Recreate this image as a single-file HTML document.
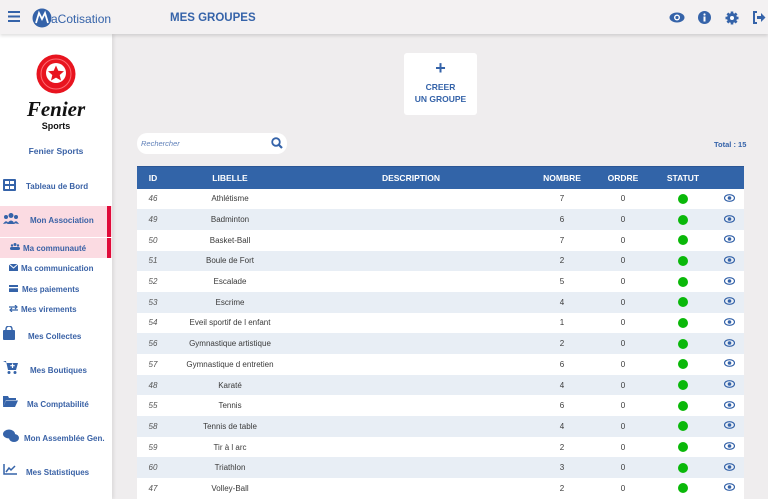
<!DOCTYPE html>
<html><head><meta charset="utf-8"><style>
*{margin:0;padding:0;box-sizing:border-box}
body{width:768px;height:499px;overflow:hidden;background:#efedee;font-family:"Liberation Sans",sans-serif;position:relative}
.top{position:absolute;left:0;top:0;width:768px;height:34px;background:#f3f1f2;box-shadow:0 2px 3px rgba(0,0,0,.12);z-index:2}
.side{position:absolute;left:0;top:34px;width:112px;height:465px;background:#fff;box-shadow:2px 0 3px rgba(0,0,0,.08)}
.blue{color:#3563a9}
.it{position:absolute;left:0;width:112px;font-size:8px;font-weight:bold;color:#3a62a6;white-space:nowrap}
.it svg{position:absolute}
.it span{position:absolute;top:0}
table{position:absolute;left:137px;top:166px;width:607px;border-collapse:collapse;font-size:8px}
th{background:#3264a8;color:#fff;height:22px;font-size:8.5px;font-weight:bold;text-align:center;border-top:1px solid #2b5694}
td{height:20.7px;text-align:center;color:#3a3a3a}
td.id{font-style:italic;color:#555}
tr:nth-child(even) td{background:#e8eef5}
tr:nth-child(odd) td{background:#fff}
.dot{display:inline-block;width:10px;height:10px;border-radius:50%;background:#0ab80a;vertical-align:middle}
</style></head><body>
<div class="top">
 <svg style="position:absolute;left:8px;top:11px" width="12" height="11"><rect y="0" width="12" height="2" fill="#3563a9"/><rect y="4.5" width="12" height="2" fill="#3563a9"/><rect y="9" width="12" height="2" fill="#3563a9"/></svg>
 <svg style="position:absolute;left:32px;top:8px" width="20" height="20"><circle cx="10" cy="10" r="9.5" fill="#3563a9"/><path d="M4 15 L7 5 L10 11 L13 5 L16 15" stroke="#fff" stroke-width="1.8" fill="none"/></svg>
 <div class="blue" style="position:absolute;left:51px;top:12px;font-size:12px">aCotisation</div>
 <div class="blue" style="position:absolute;left:170px;top:12px;font-size:11.5px;font-weight:bold">MES GROUPES</div>
 <svg style="position:absolute;left:669px;top:12px" width="16" height="11"><ellipse cx="8" cy="5.5" rx="7.5" ry="5" fill="#3563a9"/><circle cx="8" cy="5.5" r="3" fill="#fff"/><circle cx="8" cy="5.5" r="1.6" fill="#3563a9"/></svg>
 <svg style="position:absolute;left:698px;top:11px" width="13" height="13"><circle cx="6.5" cy="6.5" r="6.5" fill="#3563a9"/><rect x="5.5" y="5.5" width="2" height="5" fill="#fff"/><circle cx="6.5" cy="3.5" r="1.1" fill="#fff"/></svg>
 <svg style="position:absolute;left:725px;top:11px" width="14" height="14"><circle cx="7" cy="7" r="5" fill="#3563a9"/><g stroke="#3563a9" stroke-width="2.6"><line x1="7" y1="0.5" x2="7" y2="13.5"/><line x1="0.5" y1="7" x2="13.5" y2="7"/><line x1="2.4" y1="2.4" x2="11.6" y2="11.6"/><line x1="11.6" y1="2.4" x2="2.4" y2="11.6"/></g><circle cx="7" cy="7" r="2" fill="#fff"/></svg>
 <svg style="position:absolute;left:752px;top:11px" width="14" height="13"><path d="M5 1H2V12H5" stroke="#3563a9" stroke-width="2" fill="none"/><path d="M5 5H9V2L13.5 6.5L9 11V8H5Z" fill="#3563a9"/></svg>
</div>
<div class="side">
 <svg style="position:absolute;left:36px;top:20px" width="40" height="40"><circle cx="20" cy="20" r="19.5" fill="#e8141f"/><circle cx="20" cy="20" r="15" fill="none" stroke="#ff6b72" stroke-width="1"/><circle cx="20" cy="19" r="10" fill="#fff"/><path d="M20 11.5L22.3 16.8L28 17.2L23.7 21L25 26.5L20 23.6L15 26.5L16.3 21L12 17.2L17.7 16.8Z" fill="#e8141f"/></svg>
 <div style="position:absolute;left:0;width:112px;top:63px;text-align:center;font-family:'Liberation Serif',serif;font-style:italic;font-weight:bold;font-size:21px;color:#111">Fenier</div>
 <div style="position:absolute;left:0;width:112px;top:87px;text-align:center;font-size:9px;font-weight:bold;color:#111">Sports</div>
 <div style="position:absolute;left:0;width:112px;top:112px;text-align:center;font-size:8.5px;font-weight:bold;color:#3a62a6">Fenier Sports</div>
 <div style="position:absolute;left:0;top:172px;width:112px;height:31px;background:#fbdbe2"></div>
 <div style="position:absolute;left:0;top:204px;width:112px;height:20px;background:#fbdbe2"></div>
 <div style="position:absolute;left:107px;top:172px;width:4px;height:31px;background:#e00b3a"></div>
 <div style="position:absolute;left:107px;top:204px;width:4px;height:20px;background:#e00b3a"></div>
</div>
<div class="it" style="top:182px"><svg style="left:3px;top:-3px" width="13" height="12"><rect width="13" height="12" rx="1" fill="#3563a9"/><rect x="2" y="2" width="4" height="3" fill="#fff"/><rect x="7" y="2" width="4" height="3" fill="#fff"/><rect x="2" y="7" width="4" height="3" fill="#fff"/><rect x="7" y="7" width="4" height="3" fill="#fff"/></svg><span style="left:26px">Tableau de Bord</span></div>
<div class="it" style="top:216px"><svg style="left:3px;top:-3px" width="16" height="11"><circle cx="8" cy="2.5" r="2.5" fill="#3563a9"/><circle cx="3" cy="4" r="2" fill="#3563a9"/><circle cx="13" cy="4" r="2" fill="#3563a9"/><path d="M4 11Q8 4 12 11Z M0 11Q3 6 5.5 10Z M16 11Q13 6 10.5 10Z" fill="#3563a9"/></svg><span style="left:30px">Mon Association</span></div>
<div class="it" style="top:244px"><svg style="left:10px;top:-1px" width="10" height="7"><circle cx="5" cy="1.5" r="1.5" fill="#3563a9"/><circle cx="2" cy="2.5" r="1.2" fill="#3563a9"/><circle cx="8" cy="2.5" r="1.2" fill="#3563a9"/><rect x="0" y="4" width="10" height="3" rx="1.5" fill="#3563a9"/></svg><span style="left:23px">Ma communauté</span></div>
<div class="it" style="top:264px"><svg style="left:9px;top:0" width="9" height="7"><rect width="9" height="7" fill="#3563a9"/><path d="M0 0L4.5 4L9 0" stroke="#fff" fill="none"/></svg><span style="left:21px">Ma communication</span></div>
<div class="it" style="top:285px"><svg style="left:9px;top:0" width="9" height="7"><rect width="9" height="7" fill="#3563a9"/><rect y="2" width="9" height="1.3" fill="#fff"/></svg><span style="left:22px">Mes paiements</span></div>
<div class="it" style="top:305px"><svg style="left:9px;top:0" width="9" height="7" stroke="#3563a9" stroke-width="1.2" fill="none"><path d="M0 2H8M6 0L8 2L6 4M9 5H1M3 3L1 5L3 7"/></svg><span style="left:21px">Mes virements</span></div>
<div class="it" style="top:332px"><svg style="left:3px;top:-6px" width="12" height="14"><path d="M3 5V3A3 3 0 0 1 9 3V5" stroke="#3563a9" stroke-width="1.4" fill="none"/><rect x="0" y="4" width="12" height="10" rx="1" fill="#3563a9"/></svg><span style="left:28px">Mes Collectes</span></div>
<div class="it" style="top:366px"><svg style="left:3px;top:-6px" width="15" height="14"><path d="M0 1H3L5 10H13L15 3H4" fill="#3563a9"/><circle cx="6" cy="12.5" r="1.5" fill="#3563a9"/><circle cx="12" cy="12.5" r="1.5" fill="#3563a9"/><path d="M9.5 3.5V8M7.3 5.7H11.7" stroke="#fff" stroke-width="1.2"/></svg><span style="left:30px">Mes Boutiques</span></div>
<div class="it" style="top:400px"><svg style="left:3px;top:-4px" width="15" height="11"><path d="M0 0H5L6 2H13V4H3L0 11Z" fill="#3563a9"/><path d="M3 4.5H15L12 11H0Z" fill="#3563a9"/></svg><span style="left:27px">Ma Comptabilité</span></div>
<div class="it" style="top:434px"><svg style="left:3px;top:-5px" width="16" height="14"><ellipse cx="6" cy="5" rx="6" ry="4.5" fill="#3563a9"/><ellipse cx="11" cy="9" rx="5" ry="4" fill="#3563a9"/></svg><span style="left:24px">Mon Assemblée Gen.</span></div>
<div class="it" style="top:468px"><svg style="left:3px;top:-4px" width="14" height="11"><path d="M1 0V10H14" stroke="#3563a9" stroke-width="1.5" fill="none"/><path d="M3 8L6 4L8 6L12 2" stroke="#3563a9" stroke-width="1.5" fill="none"/></svg><span style="left:26px">Mes Statistiques</span></div>

<div style="position:absolute;left:404px;top:53px;width:73px;height:62px;background:#fff;border-radius:3px;text-align:center;color:#3563a9;font-weight:bold">
 <div style="font-size:18px;line-height:18px;margin-top:6px">+</div>
 <div style="font-size:8.5px;line-height:12px;margin-top:4px">CREER<br>UN GROUPE</div>
</div>
<div style="position:absolute;left:137px;top:133px;width:150px;height:21px;background:#fff;border-radius:10px">
 <span style="position:absolute;left:4px;top:6px;font-size:7.5px;font-style:italic;color:#5e7fb8">Rechercher</span>
 <svg style="position:absolute;left:134px;top:4px" width="12" height="12"><circle cx="5" cy="5" r="3.8" stroke="#3563a9" stroke-width="1.8" fill="none"/><path d="M8 8L11 11" stroke="#3563a9" stroke-width="2.2"/></svg>
</div>
<div style="position:absolute;left:714px;top:140px;font-size:7.5px;font-weight:bold;color:#3563a9">Total : 15</div>
<table>
<tr><th style="width:32px">ID</th><th style="width:122px">LIBELLE</th><th style="width:240px">DESCRIPTION</th><th style="width:62px">NOMBRE</th><th style="width:60px">ORDRE</th><th style="width:60px">STATUT</th><th></th></tr>
<tbody id="b"></tbody>
</table>
<script>
var d=[["46","Athlétisme",7],["49","Badminton",6],["50","Basket-Ball",7],["51","Boule de Fort",2],["52","Escalade",5],["53","Escrime",4],["54","Eveil sportif de l enfant",1],["56","Gymnastique artistique",2],["57","Gymnastique d entretien",6],["48","Karaté",4],["55","Tennis",6],["58","Tennis de table",4],["59","Tir à l arc",2],["60","Triathlon",3],["47","Volley-Ball",2]];
var eye='<svg width="11" height="8"><ellipse cx="5.5" cy="4" rx="5" ry="3.3" fill="none" stroke="#3563a9" stroke-width="1.2"/><circle cx="5.5" cy="4" r="1.8" fill="#3563a9"/></svg>';
var h="";d.forEach(function(r){h+='<tr><td class="id">'+r[0]+'</td><td>'+r[1]+'</td><td></td><td>'+r[2]+'</td><td>0</td><td><span class="dot"></span></td><td style="padding-left:2px">'+eye+'</td></tr>'});
document.getElementById("b").innerHTML=h;
</script>
</body></html>
